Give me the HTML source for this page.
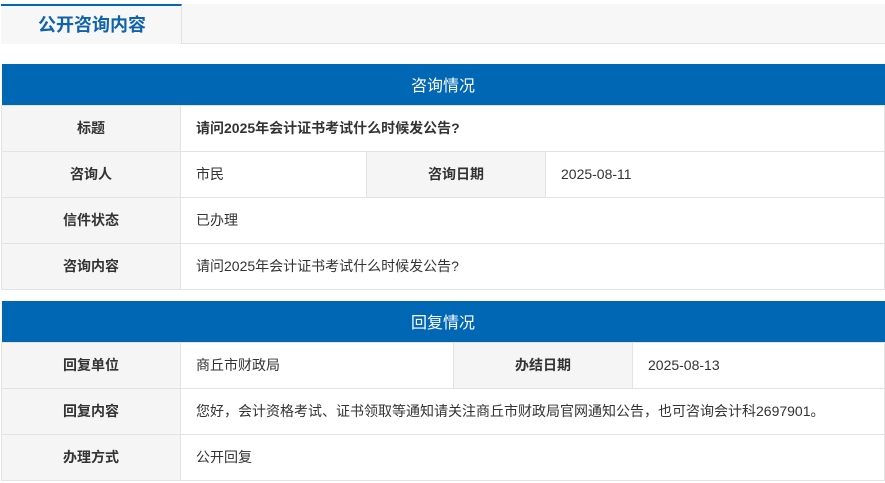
<!DOCTYPE html>
<html><head><meta charset="utf-8"><style>
*{margin:0;padding:0;box-sizing:border-box}
body{width:885px;height:483px;background:#fff;font-family:"Liberation Sans","Noto Sans CJK SC",sans-serif;font-size:14px;color:#333;position:relative;overflow:hidden}
.tabbar{position:absolute;left:1px;top:4px;width:884px;height:40px;background:#f7f7f7;border-bottom:1px solid #e2e2e2}
.tab{position:absolute;left:0;top:0;width:181px;height:40px;background:#f7f7f7;border-top:2px solid #0067b5;border-right:1px solid #e2e2e2;color:#0f62ad;font-weight:bold;font-size:18px;line-height:38px;padding-left:37px}
table{position:absolute;left:1px;width:884px;border-collapse:collapse;table-layout:fixed}
td{border:1px solid #e3e3e3;height:46px;padding:0 15px}
th{background:#0067b5;color:#fff;font-weight:normal;font-size:16px;height:41px}
.l{background:#f5f5f5;font-weight:bold;text-align:center}
</style></head><body>
<div class="tabbar"><div class="tab">公开咨询内容</div></div>
<table style="top:64px">
<colgroup><col style="width:179px"><col style="width:186px"><col style="width:179px"><col></colgroup>
<tr><th colspan="4">咨询情况</th></tr>
<tr><td class="l">标题</td><td colspan="3" style="font-weight:bold">请问2025年会计证书考试什么时候发公告?</td></tr>
<tr><td class="l">咨询人</td><td>市民</td><td class="l">咨询日期</td><td>2025-08-11</td></tr>
<tr><td class="l">信件状态</td><td colspan="3">已办理</td></tr>
<tr><td class="l">咨询内容</td><td colspan="3">请问2025年会计证书考试什么时候发公告?</td></tr>
</table>
<table style="top:301px">
<colgroup><col style="width:179px"><col style="width:273px"><col style="width:179px"><col></colgroup>
<tr><th colspan="4">回复情况</th></tr>
<tr><td class="l">回复单位</td><td>商丘市财政局</td><td class="l">办结日期</td><td>2025-08-13</td></tr>
<tr><td class="l">回复内容</td><td colspan="3">您好，会计资格考试、证书领取等通知请关注商丘市财政局官网通知公告，也可咨询会计科2697901。</td></tr>
<tr><td class="l">办理方式</td><td colspan="3">公开回复</td></tr>
</table>
</body></html>
